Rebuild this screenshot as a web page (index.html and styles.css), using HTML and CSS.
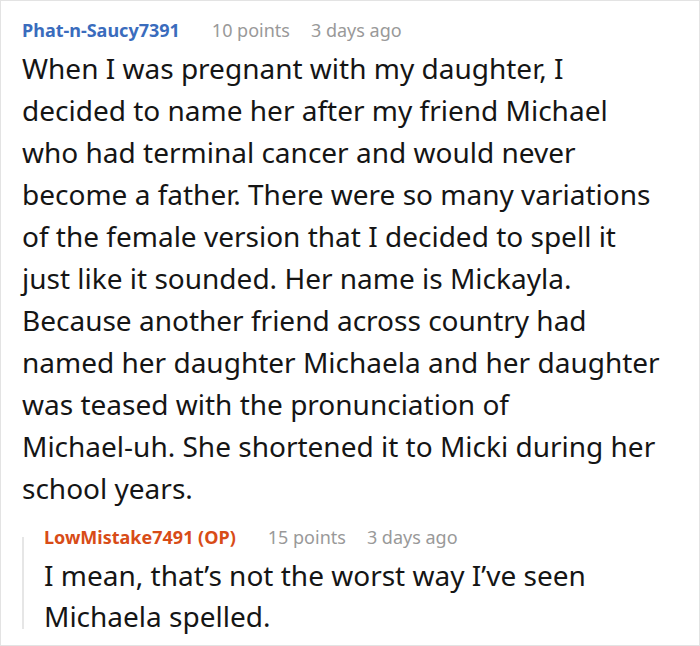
FILE: index.html
```html
<!DOCTYPE html>
<html>
<head>
<meta charset="utf-8">
<link rel="stylesheet" href="styles.css">
</head>
<body>
<div class="frame">
  <div class="comment">
    <div class="meta">
      <span class="author">Phat-n-Saucy7391</span>
      <span class="points">10 points</span>
      <span class="time">3 days ago</span>
    </div>
    <p class="text">When I was pregnant with my daughter, I decided to name her after my friend Michael who had terminal cancer and would never become a father. There were so many variations of the female version that I decided to spell it just like it sounded. Her name is Mickayla. Because another friend across country had named her daughter Michaela and her daughter was teased with the pronunciation of <span class="nowrap">Michael-uh.</span> She shortened it to Micki during her school years.</p>
    <div class="reply">
      <div class="meta">
        <span class="author op">LowMistake7491 (OP)</span>
        <span class="points">15 points</span>
        <span class="time">3 days ago</span>
      </div>
      <p class="text">I mean, that’s not the worst way I’ve seen Michaela spelled.</p>
    </div>
  </div>
</div>
</body>
</html>
```

FILE: styles.css
```css
html, body {
  margin: 0;
  padding: 0;
  background: #fff;
}
.frame {
  box-sizing: border-box;
  width: 700px;
  height: 646px;
  border: 1px solid #e3e3e3;
  overflow: hidden;
  font-family: "Noto Sans", sans-serif;
  color: #151515;
}
.comment {
  padding: 17px 39px 0 21px;
}
.meta {
  display: flex;
  align-items: baseline;
  font-size: 18px;
  line-height: 24px;
  white-space: nowrap;
}
.author {
  font-weight: 700;
  color: #3a6cbd;
  margin-right: 32px;
}
.author.op {
  color: #d84c17;
}
.points, .time {
  color: #999;
}
.points {
  margin-right: 21px;
}
.text {
  margin: 5px 0 0;
  font-size: 28px;
  line-height: 42px;
}
.nowrap {
  white-space: nowrap;
}
.reply {
  position: relative;
  margin-top: 16px;
  padding-left: 22px;
}
.reply::before {
  content: "";
  position: absolute;
  left: 0;
  top: 12px;
  height: 92px;
  width: 2px;
  background: #e6e6e6;
}
.reply .text {
  margin-top: 6px;
  line-height: 41px;
}
```
